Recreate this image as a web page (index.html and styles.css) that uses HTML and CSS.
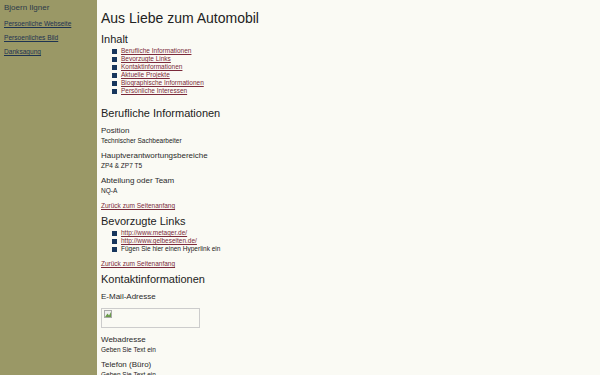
FILE: index.html
```html
<!DOCTYPE html>
<html lang="de">
<head>
<meta charset="UTF-8">
<title>Aus Liebe zum Automobil</title>
<link rel="stylesheet" href="styles.css">
</head>
<body>
<div class="page">
    <div class="side">
        <div class="owner">Bjoern Ilgner</div>
        <a href="#">Persoenliche Webseite</a>
        <a href="#">Persoenliches Bild</a>
        <a href="#">Danksagung</a>
    </div>
    <div class="main">
        <h1 id="top">Aus Liebe zum Automobil</h1>
        <h2>Inhalt</h2>
        <ul class="toc">
            <li><a href="#beruf">Berufliche Informationen</a></li>
            <li><a href="#links">Bevorzugte Links</a></li>
            <li><a href="#kontakt">Kontaktinformationen</a></li>
            <li><a href="#">Aktuelle Projekte</a></li>
            <li><a href="#">Biographische Informationen</a></li>
            <li><a href="#">Persönliche Interessen</a></li>
        </ul>

        <h2 id="beruf" class="sec first">Berufliche Informationen</h2>
        <div class="label">Position</div>
        <div class="val">Technischer Sachbearbeiter</div>
        <div class="label">Hauptverantwortungsbereiche</div>
        <div class="val">ZP4 &amp; ZP7 T5</div>
        <div class="label">Abteilung oder Team</div>
        <div class="val">NQ-A</div>
        <a class="back" href="#top">Zurück zum Seitenanfang</a>

        <h2 id="links" class="sec tight">Bevorzugte Links</h2>
        <ul class="toc">
            <li><a href="#">http://www.metager.de/</a></li>
            <li><a href="#">http://www.gelbeseiten.de/</a></li>
            <li>Fügen Sie hier einen Hyperlink ein</li>
        </ul>
        <a class="back after-list" href="#top">Zurück zum Seitenanfang</a>

        <h2 id="kontakt" class="sec">Kontaktinformationen</h2>
        <div class="label">E-Mail-Adresse</div>
        <div class="broken">
            <svg width="8" height="8" viewBox="0 0 8 8"><rect x="0.5" y="0.5" width="7" height="7" fill="#eee" stroke="#aaa"/><path d="M1 7 L3.5 3.5 L5 5.5 L7 2 L7 7 Z" fill="#6a9b4a"/></svg>
        </div>
        <div class="label">Webadresse</div>
        <div class="val">Geben Sie Text ein</div>
        <div class="label">Telefon (Büro)</div>
        <div class="val">Geben Sie Text ein</div>
    </div>
</div>
</body>
</html>
```

FILE: styles.css
```css
html{
    overflow: hidden;
}
body{
    margin: 0;
    font-family: "Liberation Sans", Arial, sans-serif;
    color: #222;
    background: #fafaf4;
}
.page{
    display: flex;
    min-height: 375px;
}
.side{
    width: 97px;
    flex-shrink: 0;
    background: #9a9866;
    padding: 3px 0 0 4px;
    box-sizing: border-box;
    display: flex;
    flex-direction: column;
}
.owner{
    font-size: 8px;
    color: #2c3a4a;
    height: 16px;
    line-height: 9px;
}
.side a{
    font-size: 6.6px;
    color: #1e3352;
    height: 14px;
    line-height: 9px;
}
.main{
    padding: 8px 0 0 4px;
}
h1{
    font-size: 14px;
    font-weight: normal;
    margin: 0 0 5px 0;
    line-height: 20px;
}
h2{
    font-size: 11px;
    font-weight: normal;
    margin: 0;
    line-height: 13px;
}
.toc{
    list-style: none;
    margin: 1px 0 0 0;
    padding: 0 0 0 11px;
}
.toc li{
    font-size: 6.5px;
    line-height: 8px;
    display: flex;
    align-items: center;
}
.toc li::before{
    content: "";
    width: 5px;
    height: 5px;
    background: #17365d;
    margin-right: 4px;
}
a{
    color: #7b2a3a;
}
.sec{
    margin-top: 5px;
    margin-bottom: 6px;
}
.first{
    margin-top: 12px;
}
.tight{
    margin-bottom: 0;
}
.label{
    font-size: 8px;
    line-height: 9px;
    color: #2a2a2a;
}
.val{
    font-size: 6.5px;
    line-height: 9px;
    margin: 1px 0 6px 0;
}
.back{
    display: block;
    font-size: 6.5px;
    line-height: 9px;
    margin-top: 2px;
}
.after-list{
    margin-top: 6px;
}
.broken{
    width: 99px;
    height: 20px;
    border: 1px solid #ccc;
    margin: 7px 0 7px 0;
    padding: 1px 0 0 2px;
    box-sizing: border-box;
}
.broken svg{
    display: block;
}
```
